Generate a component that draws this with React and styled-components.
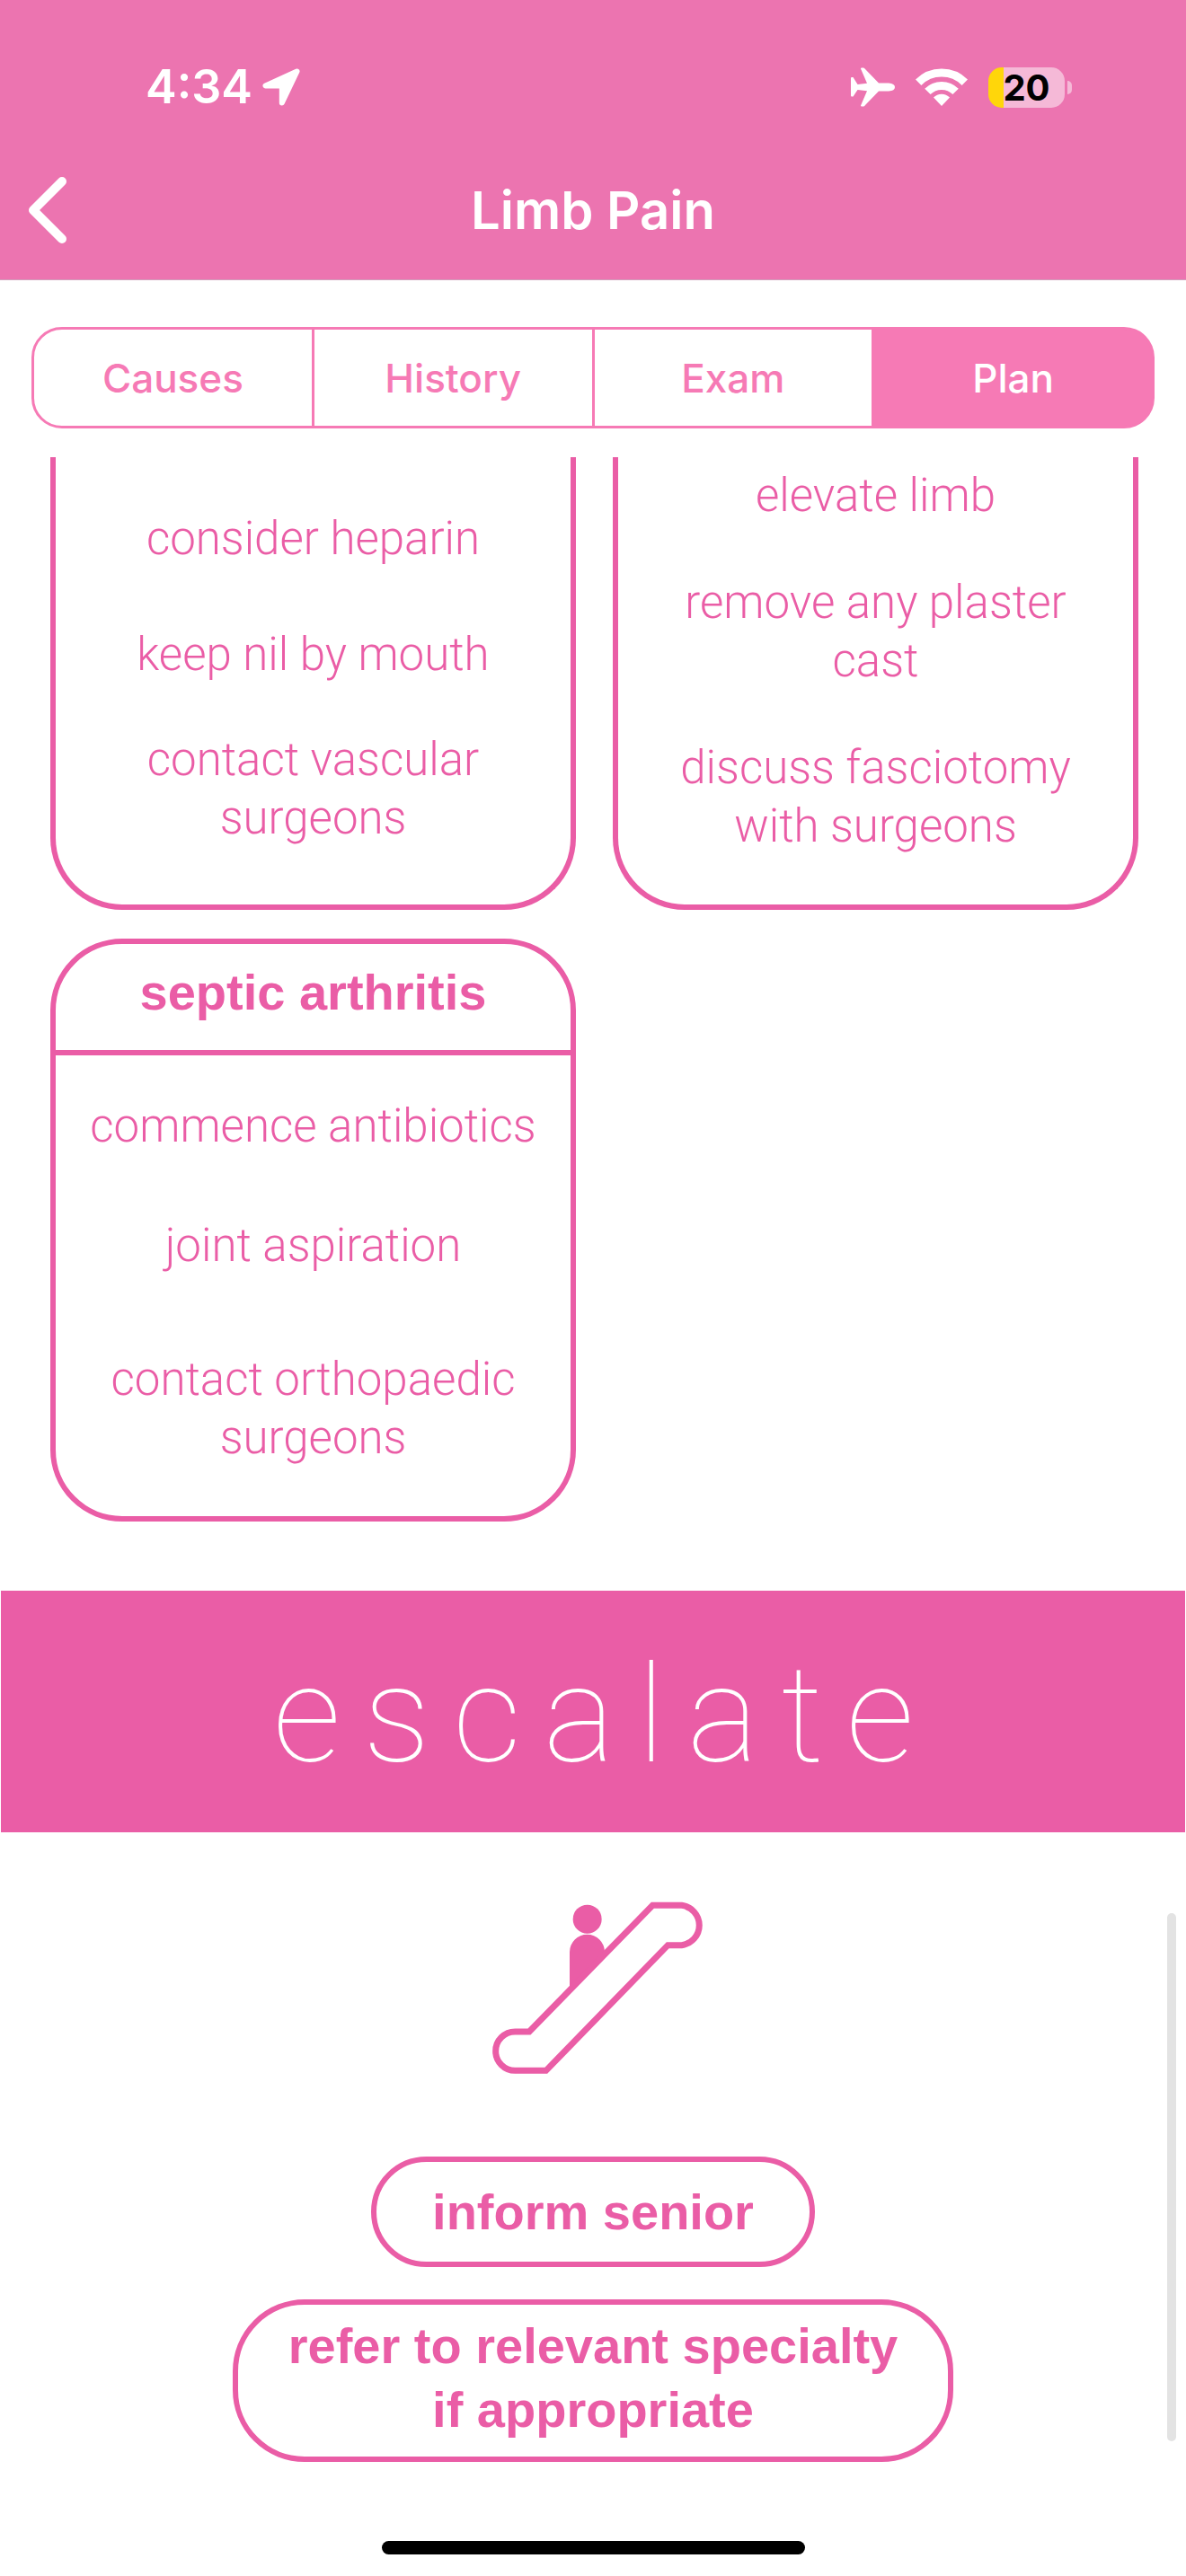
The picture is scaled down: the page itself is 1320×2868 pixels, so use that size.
import React, { useState } from "react";
import styled, { createGlobalStyle } from "styled-components";

const pink = "#ea5da6";
const tabPink = "#f67ab5";
const headerPink = "#ec74b0";
const uiFont = `Inter, "Liberation Sans", sans-serif`;

const GlobalStyle = createGlobalStyle`
  *, *::before, *::after { box-sizing: border-box; }
  body { margin: 0; background: #fff; }
  h1, h2, h3, p, ul { margin: 0; padding: 0; }
`;

const Screen = styled.div`
  position: relative;
  min-height: 100vh;
  display: flex;
  flex-direction: column;
  font-family: ${uiFont};
  background: #fff;
`;

const Header = styled.header`
  background: ${headerPink};
  border-bottom: 1px solid #d0a0bb;
  color: #fff;
`;

const StatusBar = styled.div`
  display: flex;
  align-items: center;
  justify-content: space-between;
  height: 156px;
  padding: 38px 127px 0 162px;
`;

const StatusGroup = styled.div`
  display: flex;
  align-items: center;
  gap: ${(p) => p.$gap}px;
`;

const Time = styled.span`
  font-size: 52px;
  line-height: 60px;
  font-weight: 600;
`;

const Battery = styled.div`
  display: flex;
  align-items: center;
  gap: 3px;
  &::after {
    content: "";
    width: 5px;
    height: 15px;
    border-radius: 0 5px 5px 0;
    background: #f5b9d7;
  }
`;

const BatteryBody = styled.div`
  width: 85px;
  height: 45px;
  border-radius: 15px;
  text-align: center;
  color: #000;
  font-size: 40px;
  line-height: 45px;
  font-weight: 700;
  background: linear-gradient(to right, #ffd60a 20%, #f5b9d7 20%);
`;

const NavBar = styled.div`
  display: grid;
  grid-template-columns: 1fr auto 1fr;
  align-items: center;
  height: 155px;
  padding: 0 28px;
`;

const BackButton = styled.button`
  justify-self: start;
  display: flex;
  padding: 0;
  border: 0;
  background: none;
  color: inherit;
  cursor: pointer;
`;

const Title = styled.h1`
  font-size: 58px;
  line-height: 68px;
  font-weight: 600;
`;

const Tabs = styled.div`
  display: flex;
  margin: 52px 35px 32px;
  height: 113px;
`;

const Tab = styled.button`
  flex: 1 1 0;
  padding: 0;
  border: 3px solid ${tabPink};
  border-left-width: 0;
  border-radius: 0;
  font-family: inherit;
  font-size: 44px;
  line-height: 52px;
  font-weight: 500;
  cursor: pointer;
  color: ${(p) => (p.$active ? "#fff" : tabPink)};
  background: ${(p) => (p.$active ? tabPink : "#fff")};
  &:first-child {
    border-left-width: 3px;
    border-radius: 34px 0 0 34px;
  }
  &:last-child {
    border-radius: 0 34px 34px 0;
  }
`;

const Cards = styled.section`
  display: grid;
  grid-template-columns: 1fr 1fr;
  gap: 32px 41px;
  padding: 0 53px 77px 56px;
  color: ${pink};
`;

const Card = styled.article`
  border: 6px solid ${pink};
  border-radius: ${(p) => (p.$cut ? "0 0 80px 80px" : "80px")};
  ${(p) => p.$cut && "border-top: 0;"}
`;

const CardTitle = styled.h2`
  padding: 22px 12px 32px;
  border-bottom: 6px solid ${pink};
  font-family: "Liberation Sans", Arial, sans-serif;
  font-size: 56px;
  line-height: 64px;
  font-weight: 700;
  text-align: center;
`;

const Steps = styled.ul`
  list-style: none;
  padding: 0 24px 55px;
  font-family: Roboto, "Liberation Sans", sans-serif;
  font-size: 51px;
  line-height: 65px;
  font-weight: 300;
  text-align: center;
`;

const Step = styled.li`
  padding-top: ${(p) => p.$space}px;
`;

const Banner = styled.h2`
  margin: 0 1px;
  padding: 51px 0 42px 26px;
  background: ${pink};
  color: #fff;
  font-family: Roboto, "Liberation Sans", sans-serif;
  font-size: 150px;
  line-height: 176px;
  font-weight: 100;
  letter-spacing: 25px;
  text-align: center;
`;

const Escalation = styled.section`
  display: flex;
  flex-direction: column;
  align-items: center;
  padding-top: 76px;
  color: ${pink};
`;

const Pill = styled.p`
  border: 6px solid ${pink};
  border-radius: 80px;
  margin-top: ${(p) => p.$space}px;
  padding: ${(p) => p.$pad};
  font-family: "Liberation Sans", Arial, sans-serif;
  font-size: 56px;
  line-height: 71px;
  font-weight: 700;
  text-align: center;
`;

const HomeArea = styled.footer`
  display: flex;
  justify-content: center;
  margin-top: auto;
  padding: 24px 0;
`;

const HomeIndicator = styled.div`
  width: 471px;
  height: 15px;
  border-radius: 8px;
  background: #000;
`;

const ScrollThumb = styled.div`
  position: absolute;
  right: 11px;
  bottom: 150px;
  width: 10px;
  height: 588px;
  border-radius: 5px;
  background: #e3e3e3;
`;

const LocationIcon = () => (
  <svg width="42" height="42" viewBox="0 0 42 42" aria-hidden="true">
    <path
      d="M38.5 3.5 3.5 19.5H21.8V38.5Z"
      fill="#fff"
      stroke="#fff"
      strokeWidth="6"
      strokeLinejoin="round"
    />
  </svg>
);

const PlaneIcon = () => (
  <svg width="49" height="44" viewBox="0 0 49 44" aria-hidden="true">
    <path
      d="M1 11H2.5L7.5 19 18 17.8 11 1.5Q11 .5 12 .5H14Q15 .5 16 2L31 17.5H42Q49 18 49 22T42 26.500H31L16 42Q15 43.500 14 43.500H12Q11 43.500 11 42.500L18 26.200 7.500 25 2.500 32.500H1Q0 32.500 0 31.500V12Q0 11 1 11Z"
      fill="#fff"
    />
  </svg>
);

const WifiIcon = () => (
  <svg width="58" height="42" viewBox="0 0 58 42" aria-hidden="true">
    <g fill="none" stroke="#fff" strokeWidth="9">
      <path d="M3.200 15.700A36.500 36.500 0 0 1 54.800 15.700" />
      <path d="M13.400 25.900A22 22 0 0 1 44.600 25.900" />
    </g>
    <path d="M20 32.600A12.500 12.500 0 0 1 38 32.600L29 42Z" fill="#fff" />
  </svg>
);

const BackIcon = () => (
  <svg width="50" height="76" viewBox="0 0 50 76" aria-hidden="true">
    <path
      d="M41 6 9 38 41 70"
      fill="none"
      stroke="#fff"
      strokeWidth="10"
      strokeLinecap="round"
      strokeLinejoin="round"
    />
  </svg>
);

const EscalatorIcon = () => (
  <svg width="250" height="194" viewBox="45 81 750 582" aria-hidden="true">
    <g fill={pink}>
      <circle cx="401" cy="143" r="48" />
      <path d="M342 385V253A58.500 58.500 0 0 1 459 253V270Z" />
    </g>
    <path
      d="M207 519 619 97H716A67 67 0 0 1 716 230H670L263 649H160A65 65 0 0 1 160 519Z"
      fill="#fff"
      stroke={pink}
      strokeWidth="21"
    />
  </svg>
);

const cards = [
  {
    cut: true,
    steps: [
      ["consider heparin", 58],
      ["keep nil by mouth", 64],
      ["contact vascular surgeons", 52],
    ],
  },
  {
    cut: true,
    steps: [
      ["elevate limb", 10],
      ["remove any plaster cast", 54],
      ["discuss fasciotomy with surgeons", 54],
    ],
  },
  {
    title: "septic arthritis",
    steps: [
      ["commence antibiotics", 46],
      ["joint aspiration", 68],
      ["contact orthopaedic surgeons", 84],
    ],
  },
];

const tabs = ["Causes", "History", "Exam", "Plan"];

export default function App() {
  const [active, setActive] = useState("Plan");
  return (
    <Screen>
      <GlobalStyle />
      <Header>
        <StatusBar>
          <StatusGroup $gap={11}>
            <Time>4:34</Time>
            <LocationIcon />
          </StatusGroup>
          <StatusGroup $gap={23}>
            <PlaneIcon />
            <WifiIcon />
            <Battery>
              <BatteryBody>20</BatteryBody>
            </Battery>
          </StatusGroup>
        </StatusBar>
        <NavBar>
          <BackButton type="button" aria-label="Back">
            <BackIcon />
          </BackButton>
          <Title>Limb Pain</Title>
        </NavBar>
      </Header>
      <Tabs role="tablist">
        {tabs.map((name) => (
          <Tab
            key={name}
            type="button"
            role="tab"
            aria-selected={name === active}
            $active={name === active}
            onClick={() => setActive(name)}
          >
            {name}
          </Tab>
        ))}
      </Tabs>
      <Cards>
        {cards.map((card, i) => (
          <Card key={i} $cut={card.cut}>
            {card.title && <CardTitle>{card.title}</CardTitle>}
            <Steps>
              {card.steps.map(([text, space]) => (
                <Step key={text} $space={space}>
                  {text}
                </Step>
              ))}
            </Steps>
          </Card>
        ))}
      </Cards>
      <Banner>escalate</Banner>
      <Escalation>
        <EscalatorIcon />
        <Pill $space={91} $pad="20px 62px">
          inform senior
        </Pill>
        <Pill $space={36} $pad="10px 56px 17px">
          refer to relevant specialty
          <br />
          if appropriate
        </Pill>
      </Escalation>
      <HomeArea>
        <HomeIndicator />
      </HomeArea>
      <ScrollThumb />
    </Screen>
  );
}
